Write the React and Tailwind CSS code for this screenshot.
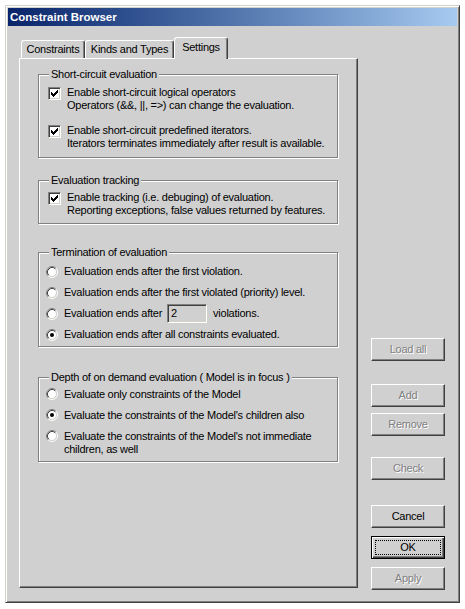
import React from 'react';

const Check = () => (
  <svg width="7" height="7" shapeRendering="crispEdges">
    {[2, 3, 4, 3, 2, 1, 0].map((y, x) => (
      <rect key={x} x={x} y={y} width="1" height="3" fill="#000" />
    ))}
  </svg>
);

const CheckBox = ({ checked }) => (
  <div className="w-[13px] h-[13px] shrink-0 mt-[1px] bg-white border border-t-[#808080] border-l-[#808080] border-b-white border-r-white shadow-[inset_1px_1px_0_#404040,inset_-1px_-1px_0_#d4d0c8] flex items-center justify-center">
    {checked && <Check />}
  </div>
);

const Radio = ({ checked }) => (
  <svg width="12" height="12" className="shrink-0">
    <circle cx="6" cy="6" r="4.5" fill="#fff" />
    <path d="M2.11 9.89 A5.5 5.5 0 0 1 9.89 2.11" stroke="#808080" fill="none" />
    <path d="M9.89 2.11 A5.5 5.5 0 0 1 2.11 9.89" stroke="#fff" fill="none" />
    <path d="M2.82 9.18 A4.5 4.5 0 0 1 9.18 2.82" stroke="#404040" fill="none" />
    <path d="M9.18 2.82 A4.5 4.5 0 0 1 2.82 9.18" stroke="#d4d0c8" fill="none" />
    {checked && <circle cx="6" cy="6" r="2" fill="#000" />}
  </svg>
);

const CheckRow = ({ checked, lines }) => (
  <div className="flex items-start">
    <CheckBox checked={checked} />
    <div className="ml-[6px]">
      {lines.map((l) => <div key={l}>{l}</div>)}
    </div>
  </div>
);

const Group = ({ label, className = '', children }) => (
  <div className={`ml-[18px] w-[300px] border border-[#808080] shadow-[inset_1px_1px_0_#fff,1px_1px_0_#fff] ${className}`}>
    <div className="-mt-[7px] ml-[10px] px-[2px] w-fit bg-[#d0d0d0]">{label}</div>
    {children}
  </div>
);

const Btn = ({ children, disabled, className = '' }) => (
  <div className={`w-[74px] h-[23px] flex items-center justify-center border border-t-white border-l-white border-r-[#404040] border-b-[#404040] shadow-[inset_-1px_-1px_0_#808080] ${disabled ? 'text-[#808080] [text-shadow:1px_1px_0_#fff]' : ''} ${className}`}>
    {children}
  </div>
);

export default function App() {
  return (
    <div className="w-[465px] h-[609px] bg-white pt-[5px] pl-[5px] font-['Liberation_Sans',Arial,sans-serif] text-[11px] leading-[13px] tracking-[-0.25px] text-black">
      <div className="w-[455px] h-[598px] bg-[#d0d0d0] border border-t-[#d4d0c8] border-l-[#d4d0c8] border-r-[#404040] border-b-[#404040] shadow-[inset_1px_1px_0_#fff,inset_-1px_-1px_0_#808080] p-[2px]">
        <div className="h-[18px] flex items-center pl-[2px] bg-linear-to-r from-[#0a246a] to-[#a6caf0] text-white font-bold text-[11.5px] tracking-normal">
          Constraint Browser
        </div>

        <div className="flex pl-[11px] pt-[11px]">
          <div className="w-[339px]">
            <div className="flex items-end h-[21px] pl-[2px]">
              <div className="w-[64px] h-[18px] flex items-center justify-center border-t border-l border-white border-r border-r-[#404040] shadow-[inset_-1px_0_0_#808080] rounded-t-[3px]">Constraints</div>
              <div className="w-[89px] h-[18px] flex items-center justify-center border-t border-l border-white border-r border-r-[#404040] shadow-[inset_-1px_0_0_#808080] rounded-t-[3px]">Kinds and Types</div>
              <div className="relative z-10 w-[54px] h-[22px] -mb-[1px] pb-[2px] flex items-center justify-center bg-[#d0d0d0] border-t border-l border-white border-r border-r-[#404040] shadow-[inset_-1px_0_0_#808080] rounded-t-[3px]">Settings</div>
            </div>

            <div className="h-[530px] border border-t-white border-l-white border-r-[#404040] border-b-[#404040] shadow-[inset_-1px_-1px_0_#808080]">
              <Group label="Short-circuit evaluation" className="mt-[15px]">
                <div className="pl-[9px] pt-[5px] pb-[7px] flex flex-col gap-[12px]">
                  <CheckRow checked lines={['Enable short-circuit logical operators', 'Operators (&&, ||, =>) can change the evaluation.']} />
                  <CheckRow checked lines={['Enable short-circuit predefined iterators.', 'Iterators terminates immediately after result is available.']} />
                </div>
              </Group>

              <Group label="Evaluation tracking" className="mt-[22px]">
                <div className="pl-[9px] pt-[4px] pb-[6px]">
                  <CheckRow checked lines={['Enable tracking (i.e. debuging) of evaluation.', 'Reporting exceptions, false values returned by features.']} />
                </div>
              </Group>

              <Group label="Termination of evaluation" className="mt-[28px]">
                <div className="pl-[7px] pt-[2px] pb-[1px]">
                  <div className="h-[21px] flex items-center gap-[6px]"><Radio /><span>Evaluation ends after the first violation.</span></div>
                  <div className="h-[21px] flex items-center gap-[6px]"><Radio /><span>Evaluation ends after the first violated (priority) level.</span></div>
                  <div className="h-[21px] flex items-center gap-[6px]">
                    <Radio />
                    <span>Evaluation ends after</span>
                    <div className="ml-[-1px] w-[40px] h-[19px] pl-[3px] flex items-center border border-t-[#808080] border-l-[#808080] border-b-white border-r-white shadow-[inset_1px_1px_0_#404040,inset_-1px_-1px_0_#d4d0c8]">2</div>
                    <span>violations.</span>
                  </div>
                  <div className="h-[21px] flex items-center gap-[6px]"><Radio checked /><span>Evaluation ends after all constraints evaluated.</span></div>
                </div>
              </Group>

              <Group label="Depth of on demand evaluation ( Model is in focus )" className="mt-[30px]">
                <div className="pl-[7px] pb-[1px]">
                  <div className="py-[4px] flex items-start gap-[6px]"><Radio /><span>Evaluate only constraints of the Model</span></div>
                  <div className="py-[4px] flex items-start gap-[6px]"><Radio checked /><span>Evaluate the constraints of the Model's children also</span></div>
                  <div className="py-[4px] flex items-start gap-[6px]">
                    <Radio />
                    <div>
                      <div>Evaluate the constraints of the Model's not immediate</div>
                      <div>children, as well</div>
                    </div>
                  </div>
                </div>
              </Group>
            </div>
          </div>

          <div className="ml-[13px] flex flex-col">
            <Btn disabled className="mt-[301px]">Load all</Btn>
            <Btn disabled className="mt-[23px]">Add</Btn>
            <Btn disabled className="mt-[6px]">Remove</Btn>
            <Btn disabled className="mt-[21px]">Check</Btn>
            <Btn className="mt-[25px]">Cancel</Btn>
            <div className="mt-[8px] w-[74px] h-[23px] flex p-[3px] border border-black shadow-[inset_1px_1px_0_#fff,inset_-1px_-1px_0_#404040,inset_-2px_-2px_0_#808080]">
              <div className="flex-1 flex items-center justify-center border border-dotted border-black">OK</div>
            </div>
            <Btn disabled className="mt-[8px]">Apply</Btn>
          </div>
        </div>
      </div>
    </div>
  );
}
